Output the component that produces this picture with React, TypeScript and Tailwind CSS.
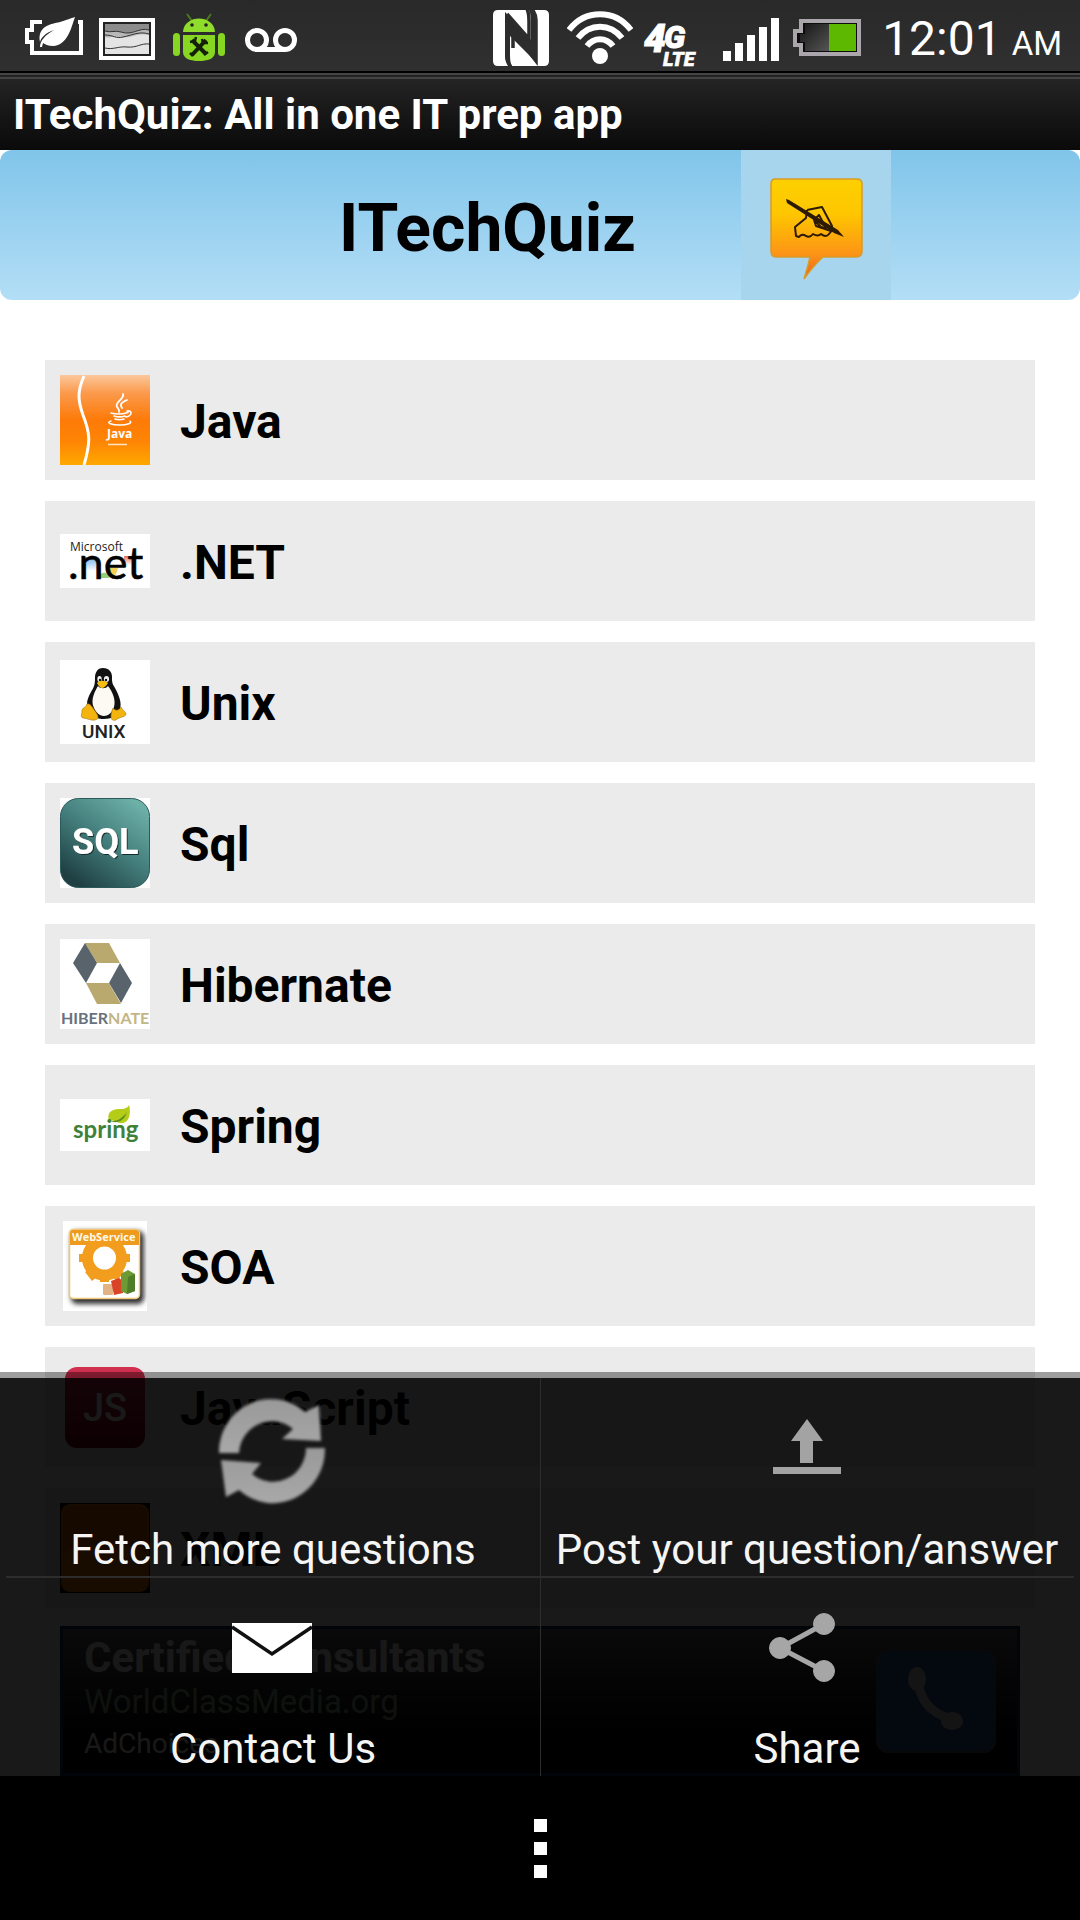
import type { ReactNode } from "react";

function JavaIcon() {
  return (
    <svg width="90" height="90" viewBox="0 0 90 90" aria-hidden="true">
      <defs>
        <linearGradient id="java" x1="0" y1="0" x2="0" y2="1">
          <stop offset="0" stopColor="#fbc79c" />
          <stop offset="0.2" stopColor="#fb9a4c" />
          <stop offset="0.5" stopColor="#fd7a08" />
          <stop offset="0.75" stopColor="#fe8604" />
          <stop offset="1" stopColor="#ffa800" />
        </linearGradient>
      </defs>
      <rect width="90" height="90" fill="url(#java)" />
      <path d="M24 1C17 17 18 26 23 40C30 58 31 66 24 90" fill="none" stroke="#fff" strokeWidth="3" />
      <g fill="none" stroke="#fff" strokeLinecap="round">
        <path d="M63 19c2 5-9 8-6 13c1 2 3 2 2 5M67 25c-7 3-7 5-5 8" strokeWidth="1.8" />
        <path d="M51 38c5 1.500 12 1 17-.5M67 36c5-1 6 4-1 6M54 41c3 1 8 1 11 0M55 44c3 1 6 1 9 0" strokeWidth="1.600" />
        <path d="M51 46c-6 2 1 4 9 4c7 0 13-2 10-4" strokeWidth="1.500" />
      </g>
      <text x="47" y="63" fontFamily="Open Sans, sans-serif" fontWeight="700" fontSize="12" fill="#fff">Java</text>
      <path d="M48 69.500h19" stroke="#ffe3c0" strokeWidth="1.500" />
    </svg>
  );
}

function NetIcon() {
  return (
    <svg width="90" height="54" viewBox="0 0 90 54" aria-hidden="true">
      <defs>
        <linearGradient id="netBlue" x1="0" y1="0" x2="0" y2="1">
          <stop offset="0" stopColor="#6fb0e8" />
          <stop offset="1" stopColor="#6fb0e8" stopOpacity="0" />
        </linearGradient>
        <linearGradient id="netRed" x1="0" y1="0" x2="0" y2="1">
          <stop offset="0" stopColor="#ee6a50" />
          <stop offset="1" stopColor="#ee6a50" stopOpacity="0" />
        </linearGradient>
      </defs>
      <rect width="90" height="54" fill="#fff" />
      <rect x="25" y="23" width="12" height="14" fill="url(#netBlue)" />
      <rect x="64" y="22" width="12" height="9" fill="url(#netRed)" />
      <path d="M38 44c2-5 5-6 8-5l4 5z" fill="#8fd07a" />
      <path d="M48 34h10c-1 5-3 8-6 10z" fill="#f4cf55" />
      <text x="10" y="17" fontFamily="Open Sans, sans-serif" fontWeight="400" fontSize="12" fill="#222">Microsoft</text>
      <text x="8" y="45" fontFamily="Lato, sans-serif" fontWeight="400" fontSize="45" fill="#000" stroke="#000" strokeWidth="0.500">.net</text>
    </svg>
  );
}

function UnixIcon() {
  return (
    <svg width="90" height="84" viewBox="0 0 90 84" aria-hidden="true">
      <rect width="90" height="84" fill="#fff" />
      <path d="M43 8c-6 0-8 5-8 10c0 7-1 9-4 14c-4 7-5 12-3 17c3 8 9 10 16 10s13-3 16-10c2-6-1-14-5-21c-3-5-3-6-3-11c0-5-3-9-9-9z" fill="#111" />
      <path d="M38 26c2 3 8 3 10 0c5 6 8 15 6 21c-2 6-6 9-10 9c-5 0-8-4-10-8c-4-8 1-17 4-22z" fill="#fcfaf2" />
      <ellipse cx="39.500" cy="19" rx="2.200" ry="3" fill="#eee" />
      <ellipse cx="46.500" cy="19" rx="2.600" ry="3" fill="#eee" />
      <circle cx="40" cy="20" r="1.200" fill="#111" />
      <circle cx="46" cy="20" r="1.200" fill="#111" />
      <path d="M37 23c2-3 8-3 11 0c-2 4-5 5-6 5s-3-1-5-5z" fill="#f5bd12" />
      <path d="M27 44c3-1 5 3 8 7c3 4 5 8 0 9c-4 1-8-2-12-2c-3-1-1-4-1-7c0-4 3-2 5-7z" fill="#f3b410" stroke="#a87400" strokeWidth="0.600" />
      <path d="M53 48c2 3 6 3 8-1c1 3 5 5 5 7c0 3-7 3-10 6c-3 1-5 0-5-4c0-3 1-5 2-8z" fill="#f3b410" stroke="#a87400" strokeWidth="0.600" />
      <text x="22" y="78" fontFamily="Roboto, sans-serif" fontWeight="500" fontSize="19" fill="#222">UNIX</text>
    </svg>
  );
}

function SqlIcon() {
  return (
    <svg width="90" height="90" viewBox="0 0 90 90" aria-hidden="true">
      <defs>
        <linearGradient id="sql" x1="0.85" y1="0.05" x2="0.2" y2="0.95">
          <stop offset="0" stopColor="#6cb0a8" />
          <stop offset="0.5" stopColor="#437d7b" />
          <stop offset="1" stopColor="#1f4043" />
        </linearGradient>
        <filter id="sqlShadow" x="-10%" y="-10%" width="130%" height="130%">
          <feDropShadow dx="1" dy="1" stdDeviation="0.5" floodColor="#142c2d" />
        </filter>
      </defs>
      <rect width="90" height="90" fill="#fff" />
      <rect x="0.500" y="0.500" width="89" height="89" rx="18" fill="url(#sql)" stroke="#2b5a5a" />
      <text x="12" y="56" fontFamily="Roboto, sans-serif" fontWeight="700" fontSize="36" fill="#fff" filter="url(#sqlShadow)">SQL</text>
    </svg>
  );
}

function HibernateIcon() {
  return (
    <svg width="90" height="90" viewBox="0 0 90 90" aria-hidden="true">
      <rect width="90" height="90" fill="#fff" />
      <path d="M25 4H49L60 24H37Z" fill="#b9a96e" />
      <path d="M25 4L37 24L26 44L13 24Z" fill="#59636c" />
      <path d="M60 24L72 44L61 64L49 44Z" fill="#59636c" />
      <path d="M26 44H49L61 65H37Z" fill="#b9a96e" />
      <text x="1" y="85" fontFamily="Lato, sans-serif" fontWeight="700" fontSize="16" fill="#68727c">
        HIBER<tspan fill="#c2b687">NATE</tspan>
      </text>
    </svg>
  );
}

function SpringIcon() {
  return (
    <svg width="90" height="52" viewBox="0 0 90 52" aria-hidden="true">
      <rect width="90" height="52" fill="#fff" />
      <path d="M49 22C46 11 55 10 61 10C66 10 68 8 69 6C71 12 70 23 63 24C57 25 55 20 49 22Z" fill="#b5cc18" />
      <path d="M49 22C56 23 62 20 67 13C64 22 58 25 49 22Z" fill="#5d8c22" />
      <text x="13" y="39" fontFamily="Lato, sans-serif" fontWeight="700" fontSize="24" fill="#3f8138">spring</text>
    </svg>
  );
}

function SoaIcon() {
  return (
    <svg width="84" height="90" viewBox="0 0 84 90" aria-hidden="true">
      <defs>
        <filter id="soaShadow" x="-20%" y="-20%" width="140%" height="140%">
          <feGaussianBlur stdDeviation="2.500" />
        </filter>
      </defs>
      <rect width="84" height="90" fill="#fff" />
      <rect x="8" y="10" width="73" height="73" rx="6" fill="#333" filter="url(#soaShadow)" />
      <rect x="6.500" y="8.500" width="70" height="69" rx="4" fill="#fff" stroke="#f0c878" strokeWidth="1.500" />
      <path d="M7 24V12a3 3 0 0 1 3-3h63a3 3 0 0 1 3 3v12z" fill="#ee9a1c" />
      <circle cx="41.500" cy="37" r="17" fill="none" stroke="#f29d1d" strokeWidth="11" />
      <g fill="#f29d1d">
        <rect x="16" y="33" width="6" height="8" />
        <rect x="61" y="33" width="6" height="8" />
        <rect x="37" y="55" width="9" height="6" />
        <path d="M22 51l6-4l7 8l-6 5zM61 51l-6-4l-7 8l6 5z" />
      </g>
      <rect x="40" y="63" width="10" height="11" rx="1" fill="#e3b385" />
      <path d="M48 60l8-3l4 3v12l-9 2z" fill="#d94428" />
      <path d="M58 53l7-4l7 4v17l-8 3l-6-3z" fill="#6c9a35" />
      <path d="M65 56l7-3v17l-8 3z" fill="#507d28" />
      <text x="9" y="20" fontFamily="Open Sans, sans-serif" fontWeight="700" fontSize="11" fill="#fff8e8">WebService</text>
    </svg>
  );
}

function JsIcon() {
  return (
    <svg width="90" height="90" viewBox="0 0 90 90" aria-hidden="true">
      <defs>
        <linearGradient id="js" x1="0" y1="0" x2="0" y2="1">
          <stop offset="0" stopColor="#d23150" />
          <stop offset="0.45" stopColor="#ad1838" />
          <stop offset="1" stopColor="#7c0012" />
        </linearGradient>
      </defs>
      <rect x="5" y="5" width="80" height="81" rx="12" fill="url(#js)" />
      <text x="45" y="59" textAnchor="middle" fontFamily="Roboto, sans-serif" fontWeight="500" fontSize="38" fill="#fff">
        JS
      </text>
    </svg>
  );
}

function XmlIcon() {
  return (
    <svg width="90" height="90" viewBox="0 0 90 90" aria-hidden="true">
      <rect width="90" height="90" fill="#000" />
      <rect x="1" y="1" width="88" height="88" rx="9" fill="#f07000" />
      <rect x="3" y="3" width="84" height="84" rx="8" fill="#d66200" />
      <path d="M3 50Q45 30 87 50V79a8 8 0 0 1-8 8H11a8 8 0 0 1-8-8z" fill="#f07c10" />
    </svg>
  );
}

const topics: { name: string; icon: ReactNode }[] = [
  { name: "Java", icon: <JavaIcon /> },
  { name: ".NET", icon: <NetIcon /> },
  { name: "Unix", icon: <UnixIcon /> },
  { name: "Sql", icon: <SqlIcon /> },
  { name: "Hibernate", icon: <HibernateIcon /> },
  { name: "Spring", icon: <SpringIcon /> },
  { name: "SOA", icon: <SoaIcon /> },
  { name: "JavaScript", icon: <JsIcon /> },
  { name: "XML", icon: <XmlIcon /> },
];

function StatusIconsLeft() {
  return (
    <div className="flex items-center gap-4">
      <svg width="58" height="48" viewBox="0 0 58 48" aria-hidden="true">
        <path d="M17 8H7V16H2V28H7V39H56V8H53" fill="none" stroke="#fff" strokeWidth="4" />
        <path d="M15 33C15 27 20 21 29 16C20 19 16 24 15 28C12 12 26 10 35 8C42 6 46 4 50 3C46 14 43 31 28 32C23 32 20 30 18 29L17 33Z" fill="#fff" />
      </svg>
      <svg width="56" height="48" viewBox="0 0 56 48" aria-hidden="true">
        <rect x="2" y="6" width="52" height="38" fill="#222" stroke="#fff" strokeWidth="4" />
        <g transform="translate(0 1)">
          <rect x="6" y="9" width="44" height="31" fill="#e4e4e4" />
          <path d="M6 9H50V15C40 12 34 21 22 17C16 15 12 18 6 16Z" fill="#8c8c8c" />
          <path d="M6 16C12 18 16 15 22 17C34 21 40 12 50 15V20C38 17 34 24 20 22C14 20 10 24 6 22Z" fill="#b8b8b8" />
          <path d="M6 16C12 18 16 15 22 17C34 21 40 12 50 15M6 20C14 20 17 24 24 22C34 20 40 16 50 19M6 33C14 35 20 31 28 32C38 33 42 28 50 29" fill="none" stroke="#333" />
          <rect x="5" y="8" width="46" height="32" fill="none" stroke="#222" strokeWidth="2" />
        </g>
      </svg>
      <svg width="56" height="52" viewBox="0 0 56 52" aria-hidden="true">
        <path d="M16 2l5 7M40 2l-5 7" stroke="#4c7a1e" strokeWidth="2" />
        <path d="M12 20C13 2 43 2 44 20Z" fill="#8fdc2d" />
        <path d="M12 23H44V40C44 47 36 49 28 49S12 47 12 40Z" fill="#86d622" />
        <rect x="2" y="21" width="7" height="23" rx="3.500" fill="#86d622" />
        <rect x="47" y="21" width="7" height="23" rx="3.500" fill="#86d622" />
        <circle cx="21" cy="13" r="1.800" fill="#222" />
        <circle cx="35" cy="13" r="1.800" fill="#222" />
        <path d="M21 43L35 28M21 28L35 42" stroke="#152008" strokeWidth="4" />
        <path d="M19 30l5-1l1-4M31 27l1 4l5 0M19 41l3 3M33 43l4-3" fill="none" stroke="#152008" strokeWidth="2.500" />
      </svg>
      <svg width="56" height="48" viewBox="0 0 56 48" aria-hidden="true">
        <g fill="none" stroke="#fff" strokeWidth="5">
          <circle cx="14" cy="26" r="9.500" />
          <circle cx="42" cy="26" r="9.500" />
          <path d="M14 35.500H42" />
        </g>
      </svg>
    </div>
  );
}

function StatusIconsRight() {
  return (
    <div className="flex items-center">
      <svg width="56" height="56" viewBox="0 0 56 56" aria-hidden="true">
        <path d="M5 0H36C38 4 38 10 38 15V30L12 2V46C12 50 13 53 16 56H5Q0 56 0 51V5Q0 0 5 0Z" fill="#fff" />
        <path d="M40 0H51Q56 0 56 5V51Q56 56 51 56H19C17 53 17 48 17 42V26L44 53V10C44 6 43 3 40 0Z" fill="#fff" />
        <path d="M14 4V45C14 50 15 54 18 57M14 4L36 29V12C36 7 36 3 34 -1M20 25V38M20 25L36 42L43 51V10C43 6 42 3 39 -1" fill="none" stroke="#2d2d2d" strokeWidth="3.500" />
      </svg>
      <svg className="ml-[18px]" width="66" height="56" viewBox="0 0 66 56" aria-hidden="true">
        <g fill="none" stroke="#fff" strokeWidth="6">
          <path d="M2 20C18 -1 48 -1 64 20" />
          <path d="M11 28C23 13 43 13 55 28" />
          <path d="M20 36C27 27 39 27 46 36" />
        </g>
        <circle cx="33" cy="46" r="8" fill="#fff" />
      </svg>
      <svg className="ml-2" width="66" height="64" viewBox="0 0 66 64" aria-hidden="true">
        <g fontFamily="Roboto, sans-serif" fontStyle="italic" fontWeight="900" fill="#fff" stroke="#fff">
          <text x="3" y="46" fontSize="39">
            4<tspan y="42" dx="-2" fontSize="32">G</tspan>
          </text>
          <text x="22" y="60" fontSize="20" strokeWidth="0.500">LTE</text>
        </g>
      </svg>
      <svg className="ml-4" width="56" height="56" viewBox="0 0 56 56" aria-hidden="true">
        <path d="M0 41h8v10H0zM12 33h8v18h-8zM24 25h8v26h-8zM36 17h8v34h-8zM48 8h8v43h-8z" fill="#fff" />
      </svg>
      <svg className="ml-3.5" width="68" height="56" viewBox="0 0 68 56" aria-hidden="true">
        <defs>
          <linearGradient id="cell" x1="0" y1="0" x2="1" y2="1">
            <stop offset="0" stopColor="#151515" />
            <stop offset="1" stopColor="#555" />
          </linearGradient>
        </defs>
        <path d="M8 11H66V44H8V35H2V21H8Z" fill="#0c0c0c" stroke="#aaa6ac" strokeWidth="4" />
        <path d="M12 14H36V41H12V32H7V24H12Z" fill="url(#cell)" />
        <rect x="36" y="14" width="27" height="27" fill="#5cb800" />
      </svg>
    </div>
  );
}

function MenuItem({ label, icon }: { label: string; icon: ReactNode }) {
  return (
    <button type="button" className="flex flex-col items-center pt-[11px] pb-[3px] text-[42px] leading-[48px] whitespace-nowrap text-[#f5f5f5]">
      <svg width="120" height="120" viewBox="0 0 120 120" aria-hidden="true">
        {icon}
      </svg>
      <span className="mt-[17px]">{label}</span>
    </button>
  );
}

export default function App() {
  return (
    <div className="flex min-h-screen flex-col bg-white font-[Roboto,sans-serif]">
      <div className="flex h-[73px] items-center justify-between overflow-hidden border-b-2 border-black bg-linear-to-b from-[#292929] to-[#303030] pt-1 pr-[18px] pl-[25px] text-white">
        <StatusIconsLeft />
        <div className="flex items-center">
          <StatusIconsRight />
          <div className="flex items-baseline gap-2.5 pt-2 pl-[21px] leading-[56px]">
            <span className="text-[48px]">12:01</span>
            <span className="text-[33px]">AM</span>
          </div>
        </div>
      </div>

      <div className="h-1.5 border-y-2 border-[#444] bg-[#222]" />
      <div className="flex h-[71px] items-center bg-linear-to-b from-[#242424] to-[#0a0a0a] px-[13px] text-[42px] leading-[48px] font-bold text-white">
        ITechQuiz: All in one IT prep app
      </div>

      <main className="relative flex-1">
        <header className="flex h-[150px] items-center rounded-xl bg-linear-to-b from-[#80c5ea] to-[#b3def6]">
          <h1 className="w-[68.6%] pt-2 pr-[105px] text-right text-[66px] leading-[72px] font-bold text-black">ITechQuiz</h1>
          <button type="button" aria-label="Write" className="flex size-[150px] items-center justify-center bg-[#a6d5ed]">
            <svg width="150" height="150" viewBox="0 0 150 150" aria-hidden="true">
              <defs>
                <linearGradient id="bubble" x1="0" y1="0" x2="0" y2="1">
                  <stop offset="0" stopColor="#fdd000" />
                  <stop offset="0.35" stopColor="#fec600" />
                  <stop offset="0.75" stopColor="#fd9416" />
                  <stop offset="1" stopColor="#e8601c" />
                </linearGradient>
              </defs>
              <path d="M34 29H116Q121 29 121 34V101Q121 107 115 107H82Q73 115 63 129Q67 116 69 107H35Q30 107 30 101V34Q30 29 34 29Z" fill="url(#bubble)" stroke="#d99a2a" strokeWidth="1.500" />
              <g fill="none" stroke="#2c1a05" strokeWidth="2" strokeLinejoin="round">
                <path d="M66 60L81 57L91 76L90 82M66 60L65 68L54 77L55 86L58 87Q61 83 65 86Q69 88 72 84Q77 87 80 84Q85 88 88 84L92 79M73 70L78 65L85 78L80 77ZM73 70L75 76L90 81" />
              </g>
              <path d="M45 49L48 50L97 80L103 87L93 83L46 53Z" fill="#2c1a05" />
            </svg>
          </button>
        </header>

        <ul className="flex flex-col gap-[21px] px-[45px] pt-[60px]">
          {topics.map((topic) => (
            <li key={topic.name}>
              <button type="button" className="flex h-[120px] w-full items-center gap-[30px] bg-[#ebebeb] px-[15px] text-left text-[48px] leading-[56px] font-bold text-black">
                <span className="flex w-[90px] justify-center">{topic.icon}</span>
                <span className="pt-1">{topic.name}</span>
              </button>
            </li>
          ))}
        </ul>

        <a href="#ad" className="mx-[60px] mt-[18px] flex h-[150px] items-center justify-between border-3 border-[#123a66] bg-linear-to-b from-[#606060] to-[#080808] to-70% px-[21px] text-[#eee]">
          <span className="flex flex-col pb-0.5">
            <span className="text-[42px] leading-[46px] font-bold">Certified Consultants</span>
            <span className="text-[33px] leading-[42px] text-[#8fb08f]">WorldClassMedia.org</span>
            <span className="text-[28px] leading-[42px]">AdChoices</span>
          </span>
          <span className="flex h-[104px] w-[120px] items-center justify-center rounded-xl border-2 border-[#555] bg-[#2a4f9a]">
            <svg width="80" height="80" viewBox="0 0 80 80" aria-hidden="true">
              <path d="M22 18Q24 50 56 58" fill="none" stroke="#ccc" strokeWidth="9" />
              <ellipse cx="21" cy="18" rx="9" ry="12" fill="#ccc" />
              <ellipse cx="56" cy="60" rx="11" ry="9" fill="#ccc" />
            </svg>
          </span>
        </a>

        <nav aria-label="Options" className="absolute inset-x-0 bottom-0">
          <div className="h-1.5 bg-black/38" />
          <div className="relative grid grid-cols-2 bg-black/90 px-1.5">
            <MenuItem
              label="Fetch more questions"
              icon={
                <>
                  <defs>
                    <filter id="soft">
                      <feGaussianBlur stdDeviation="1.500" />
                    </filter>
                    <linearGradient id="sync" x1="0" y1="0" x2="0" y2="1">
                      <stop offset="0" stopColor="#999" />
                      <stop offset="1" stopColor="#a8a8a8" />
                    </linearGradient>
                  </defs>
                  <g fill="url(#sync)" filter="url(#soft)">
                    <path d="M6 64A52 53 0 0 1 92 23L106 16L108 52L69 50L80 40A33 34 0 0 0 26 64Z" />
                    <path d="M112 59A52 54 0 0 1 26 101L13 108L8 71L48 74L39 85A33 34 0 0 0 93 59Z" />
                  </g>
                </>
              }
            />
            <MenuItem
              label="Post your question/answer"
              icon={<path d="M60 30L76 52H66V74H53V52H44ZM26 78H94V85H26Z" fill="#a3a3a3" />}
            />
            <MenuItem
              label="Contact Us"
              icon={
                <>
                  <rect x="19" y="35" width="80" height="50" fill="#fff" />
                  <path d="M19 39L59 66L99 39" fill="none" stroke="#111" strokeWidth="3.500" />
                </>
              }
            />
            <MenuItem
              label="Share"
              icon={
                <g fill="#a6a6a6" stroke="#a6a6a6">
                  <path d="M77 36L33 60L77 83" fill="none" strokeWidth="5" />
                  <circle cx="33" cy="60" r="10.500" />
                  <circle cx="77" cy="36" r="10.500" />
                  <circle cx="77" cy="83" r="10.500" />
                </g>
              }
            />
            <div className="pointer-events-none absolute inset-x-1.5 top-1/2 h-0.5 -translate-y-px bg-[#2d2d2d]" />
            <div className="pointer-events-none absolute inset-y-0 left-1/2 w-px bg-[#2d2d2d]" />
          </div>
        </nav>
      </main>

      <footer className="flex h-36 items-center justify-center bg-black">
        <button type="button" aria-label="More options" className="flex flex-col gap-2.5 p-3">
          <span className="size-[13px] bg-white" />
          <span className="size-[13px] bg-white" />
          <span className="size-[13px] bg-white" />
        </button>
      </footer>
    </div>
  );
}
